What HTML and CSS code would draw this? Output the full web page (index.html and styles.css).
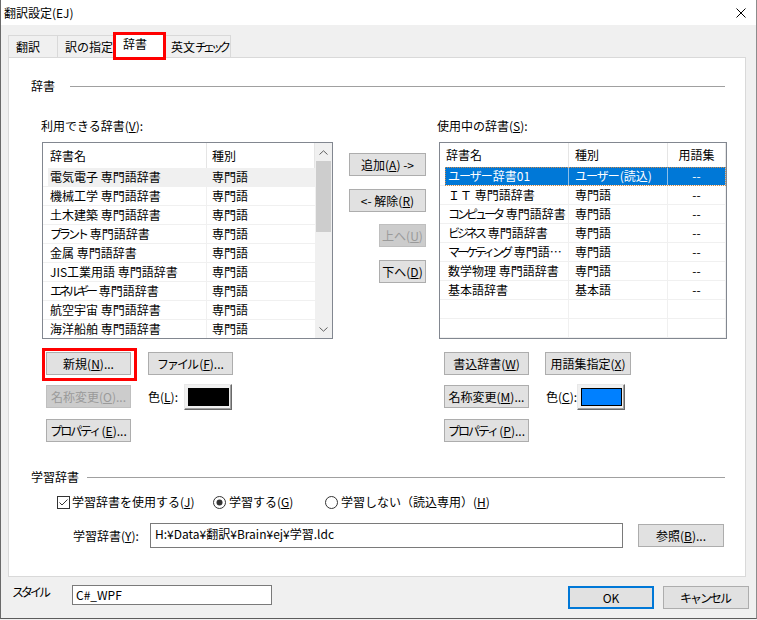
FILE: index.html
```html
<!DOCTYPE html>
<html lang="ja">
<head>
<meta charset="utf-8">
<title>翻訳設定(EJ)</title>
<link rel="stylesheet" href="styles.css">
</head>
<body>
<div class="window">
  <div class="titlebar">
    <span class="title">翻訳設定(EJ)</span>
    <svg class="close" viewBox="0 0 10 10" width="10" height="10"><path d="M0.5 0.5 L9.5 9.5 M9.5 0.5 L0.5 9.5" stroke="#000" stroke-width="1" fill="none"/></svg>
  </div>

  <div class="tabs">
    <div class="tab t1">翻訳</div>
    <div class="tab t2">訳の指定</div>
    <div class="tab sel">辞書</div>
    <div class="tab t4">英文<span class="kn4">チェック</span></div>
  </div>

  <div class="panel">
    <div class="group-head h1"><span class="gl">辞書</span><span class="rule"></span></div>

    <div class="main">
      <div class="col-left">
        <div class="lbl lbl-left">利用できる辞書(<u>V</u>):</div>
        <div class="list">
          <div class="lv">
            <div class="lv-head"><div class="lc1">辞書名</div><div class="lc2">種別</div></div>
            <div class="lv-row hover"><div class="lc1">電気電子 専門語辞書</div><div class="lc2">専門語</div></div>
            <div class="lv-row"><div class="lc1">機械工学 専門語辞書</div><div class="lc2">専門語</div></div>
            <div class="lv-row"><div class="lc1">土木建築 専門語辞書</div><div class="lc2">専門語</div></div>
            <div class="lv-row"><div class="lc1"><span class="kn">プラント</span> 専門語辞書</div><div class="lc2">専門語</div></div>
            <div class="lv-row"><div class="lc1">金属 専門語辞書</div><div class="lc2">専門語</div></div>
            <div class="lv-row"><div class="lc1">JIS工業用語 専門語辞書</div><div class="lc2">専門語</div></div>
            <div class="lv-row"><div class="lc1"><span class="kn">エネルギー</span> 専門語辞書</div><div class="lc2">専門語</div></div>
            <div class="lv-row"><div class="lc1">航空宇宙 専門語辞書</div><div class="lc2">専門語</div></div>
            <div class="lv-row"><div class="lc1">海洋船舶 専門語辞書</div><div class="lc2">専門語</div></div>
          </div>
          <div class="vscroll">
            <div class="sb-btn"><svg viewBox="0 0 9 5" width="9" height="5"><path d="M0.5 4.5 L4.5 0.8 L8.5 4.5" stroke="#606060" fill="none"/></svg></div>
            <div class="sb-thumb"></div>
            <div class="sb-track"></div>
            <div class="sb-btn"><svg viewBox="0 0 9 5" width="9" height="5"><path d="M0.5 0.5 L4.5 4.2 L8.5 0.5" stroke="#606060" fill="none"/></svg></div>
          </div>
        </div>
        <div class="btnrows">
          <div class="btnrow">
            <button class="btn bl newbtn">新規(<u>N</u>)...</button>
            <button class="btn bl gap17"><span class="kn2">ファイル</span>(<u>F</u>)...</button>
          </div>
          <div class="btnrow">
            <button class="btn bl dis">名称変更(<u>O</u>)...</button>
            <span class="clbl clbl-l">色(<u>L</u>):</span>
            <div class="swatch"><div class="fill black"></div></div>
          </div>
          <div class="btnrow r3">
            <button class="btn bl"><span class="kn2">プロパティ</span>(<u>E</u>)...</button>
          </div>
        </div>
      </div>

      <div class="col-mid">
        <button class="btn mb1">追加(<u>A</u>) -&gt;</button>
        <button class="btn mb2">&lt;- 解除(<u>R</u>)</button>
        <button class="btn mb3 dis">上へ(<u>U</u>)</button>
        <button class="btn mb4">下へ(<u>D</u>)</button>
      </div>

      <div class="col-right">
        <div class="lbl">使用中の辞書(<u>S</u>):</div>
        <div class="list list-r">
          <div class="rv">
            <div class="rv-head"><div class="rc1">辞書名</div><div class="rc2">種別</div><div class="rc3">用語集</div></div>
            <div class="rv-row sel"><div class="rc1"><span class="kn1">ユーザー</span>辞書01</div><div class="rc2"><span class="kn1">ユーザー</span>(読込)</div><div class="rc3">--</div></div>
            <div class="rv-row"><div class="rc1"><span class="fw">ＩＴ</span> 専門語辞書</div><div class="rc2">専門語</div><div class="rc3">--</div></div>
            <div class="rv-row"><div class="rc1"><span class="kn">コンピュータ</span> 専門語辞書</div><div class="rc2">専門語</div><div class="rc3">--</div></div>
            <div class="rv-row"><div class="rc1"><span class="kn">ビジネス</span> 専門語辞書</div><div class="rc2">専門語</div><div class="rc3">--</div></div>
            <div class="rv-row"><div class="rc1"><span class="kn">マーケティング</span> 専門語辞書</div><div class="rc2">専門語</div><div class="rc3">--</div></div>
            <div class="rv-row"><div class="rc1">数学物理 専門語辞書</div><div class="rc2">専門語</div><div class="rc3">--</div></div>
            <div class="rv-row"><div class="rc1">基本語辞書</div><div class="rc2">基本語</div><div class="rc3">--</div></div>
            <div class="rv-row"><div class="rc1"></div><div class="rc2"></div><div class="rc3"></div></div>
            <div class="rv-row"><div class="rc1"></div><div class="rc2"></div><div class="rc3"></div></div>
          </div>
        </div>
        <div class="btnrows">
          <div class="btnrow">
            <button class="btn br">書込辞書(<u>W</u>)</button>
            <button class="btn br2">用語集指定(<u>X</u>)</button>
          </div>
          <div class="btnrow">
            <button class="btn br">名称変更(<u>M</u>)...</button>
            <span class="clbl clbl-r">色(<u>C</u>):</span>
            <div class="swatch"><div class="fill blue"></div></div>
          </div>
          <div class="btnrow r3">
            <button class="btn br"><span class="kn2">プロパティ</span>(<u>P</u>)...</button>
          </div>
        </div>
      </div>
    </div>

    <div class="group-head h2"><span class="gl">学習辞書</span><span class="rule"></span></div>

    <div class="optrow">
      <div class="opt opt-chk">
        <svg class="box" viewBox="0 0 13 13" width="13" height="13"><rect x="0.5" y="0.5" width="12" height="12" fill="#fff" stroke="#333"/><path d="M2.5 6.5 L5 9 L10.5 3.5" stroke="#333" fill="none"/></svg>
        <span class="olbl">学習辞書を使用する(<u>J</u>)</span>
      </div>
      <div class="opt opt-r1">
        <svg class="box" viewBox="0 0 13 13" width="13" height="13"><circle cx="6.5" cy="6.5" r="6" fill="#fff" stroke="#333"/><circle cx="6.5" cy="6.5" r="3" fill="#333"/></svg>
        <span class="olbl olbl-r">学習する(<u>G</u>)</span>
      </div>
      <div class="opt">
        <svg class="box" viewBox="0 0 13 13" width="13" height="13"><circle cx="6.5" cy="6.5" r="6" fill="#fff" stroke="#333"/></svg>
        <span class="olbl olbl-r">学習しない（読込専用）(<u>H</u>)</span>
      </div>
    </div>

    <div class="dictrow">
      <span class="dlbl">学習辞書(<u>Y</u>):</span>
      <div class="tbox tbox-dict">H:¥Data¥翻訳¥Brain¥ej¥学習.ldc</div>
      <button class="btn bref">参照(<u>B</u>)...</button>
    </div>
  </div>

  <div class="footer">
    <span class="flbl"><span class="kn">スタイル</span></span>
    <div class="tbox tbox-style">C#_WPF</div>
    <span class="spacer"></span>
    <button class="btn def fbtn">OK</button>
    <button class="btn fbtn fcancel"><span class="kn2">キャンセル</span></button>
  </div>
</div>
</body>
</html>
```

FILE: styles.css
```css
*, *::before, *::after { box-sizing: border-box; }

body {
  margin: 0;
  background: #f0f0f0;
  font-family: "Noto Sans CJK JP", "Noto Sans", sans-serif;
  font-size: 12px;
  color: #000;
}

u { text-underline-offset: 1px; }

/* narrower kana, as in the UI font of the original */
.kn { letter-spacing: -3px; margin-right: 1px; }
.kn1 { letter-spacing: -1px; margin-right: 1px; }
.kn2 { letter-spacing: -2px; margin-right: 2px; }
.kn4 { letter-spacing: -4px; }
.fw { letter-spacing: 0; }

.window {
  width: 757px;
  height: 619px;
  background: #f0f0f0;
  border-left: 1px solid #6a6a6a;
  border-right: 1px solid #8c8c8c;
  border-bottom: 1px solid #5c5c5c;
  display: flex;
  flex-direction: column;
}

/* title bar */
.titlebar {
  flex: none;
  height: 25px;
  background: #fff;
  display: flex;
  align-items: center;
  padding-left: 3px;
  padding-right: 10px;
}
.title { flex: 1; line-height: 16px; }
.close { display: block; }

/* tabs */
.tabs {
  flex: none;
  height: 32px;
  display: flex;
  align-items: flex-end;
  padding-left: 7px;
}
.tab {
  height: 22px;
  border: 1px solid #d9d9d9;
  border-bottom: none;
  background: #f0f0f0;
  line-height: 22px;
  padding-left: 7px;
  white-space: nowrap;
  overflow: hidden;
}
.tab + .tab { margin-left: -1px; }
.t1 { width: 50px; }
.t2 { width: 59px; }
.tab.sel {
  width: 51px;
  height: 26px;
  margin-left: -2px;
  margin-right: -2px;
  margin-bottom: -1px;
  background: #fff;
  position: relative;
  z-index: 2;
  padding-left: 8px;
  line-height: 22px;
  overflow: visible;
}
.tab.sel::after {
  content: "";
  position: absolute;
  left: -2px;
  top: -1px;
  width: 53px;
  height: 28px;
  border: 3px solid #f00;
}
.tab.t4 { width: 68px; margin-left: 0; }

/* panel */
.panel {
  flex: none;
  margin-left: 7px;
  width: 738px;
  height: 520px;
  background: #fff;
  border: 1px solid #d9d9d9;
}

.group-head {
  display: flex;
  align-items: flex-start;
  height: 16px;
  margin-left: 22px;
  margin-right: 20px;
}
.group-head .gl { flex: none; line-height: 16px; }
.group-head .rule { flex: 1; height: 1px; margin-top: 8px; background: #a0a0a0; }
.h1 { margin-top: 20px; }
.h1 .gl { width: 39px; }
.h2 { margin-top: 27px; }
.h2 .gl { width: 56px; }

.main {
  display: flex;
  margin-top: 24px;
  margin-left: 33px;
}

.lbl { height: 16px; line-height: 16px; white-space: nowrap; }
.lbl-left { margin-left: -1px; }

.col-left { flex: none; width: 291px; }
.col-mid {
  flex: none;
  width: 77px;
  margin-left: 16px;
  display: flex;
  flex-direction: column;
  align-items: flex-end;
}
.col-right { flex: none; width: 290px; margin-left: 11px; }

/* list views */
.list {
  margin-top: 8px;
  height: 197px;
  border: 1px solid #828790;
  background: #fff;
  display: flex;
  overflow: hidden;
}
.list-r { margin-left: 2px; width: 288px; }

.lv { flex: none; width: 272px; overflow: hidden; }
.lv-head { display: flex; height: 25px; }
.lv-head > div { line-height: 25px; border-right: 1px solid #e5e5e5; }
.lv-row { display: flex; height: 19px; border-bottom: 1px solid #f0f0f0; line-height: 18px; }
.lv-row .lc1 { border-right: 1px solid #f0f0f0; }
.lv-row.hover { background: linear-gradient(to right, transparent 5px, #f0f0f0 5px); }
.lc1 { width: 164px; padding-left: 7px; white-space: nowrap; }
.lc2 { width: 108px; padding-left: 5px; white-space: nowrap; }

.vscroll {
  flex: none;
  width: 17px;
  background: #f0f0f0;
  display: flex;
  flex-direction: column;
}
.sb-btn {
  height: 18px;
  display: flex;
  align-items: center;
  justify-content: center;
}
.sb-btn svg { display: block; }
.sb-thumb { height: 71px; background: #cdcdcd; margin: 0 1px; }
.sb-track { flex: 1; }

.rv { width: 286px; }
.rv-head { display: flex; height: 24px; }
.rv-head > div { line-height: 24px; border-right: 1px solid #e5e5e5; }
.rv-row {
  display: flex;
  height: 19px;
  border-bottom: 1px solid #f0f0f0;
  line-height: 18px;
}
.rv-row > div { border-right: 1px solid #f0f0f0; }
.rc1 {
  width: 129px;
  padding-left: 7px;
  padding-right: 1px;
  white-space: nowrap;
  overflow: hidden;
  text-overflow: ellipsis;
}
.rv-head .rc1 { padding-left: 6px; }
.rv-row .rc1 { padding-left: 8px; }
.rc2 { width: 99px; padding-left: 6px; white-space: nowrap; }
.rc3 { width: 58px; text-align: center; white-space: nowrap; }
.rv-row.sel {
  position: relative;
  color: #fff;
  background: linear-gradient(to right, transparent 5px, #0078d7 5px);
}
.rv-row.sel > div { border-right-color: #8cbfe9; }
.rv-row.sel::after {
  content: "";
  position: absolute;
  left: 5px;
  right: 0;
  top: 0;
  bottom: -1px;
  border: 1px dotted #d08a48;
}

/* buttons */
.btn {
  height: 23px;
  padding: 0;
  margin: 0;
  background: #e1e1e1;
  border: 1px solid #adadad;
  border-radius: 0;
  font: inherit;
  color: #000;
  line-height: 20px;
  text-align: center;
  white-space: nowrap;
  flex: none;
}
.btn.dis { background: #cccccc; border-color: #bfbfbf; color: #9a9a9a; }
.btn.def { border: 2px solid #0078d7; }

.btnrows { margin-top: 13px; }
.btnrow { display: flex; align-items: center; height: 23px; }
.btnrow + .btnrow { margin-top: 10px; }
.btnrow.r3 { margin-top: 11px; }

.bl { width: 85px; margin-left: 4px; }
.bl.gap17 { margin-left: 17px; }
.newbtn { position: relative; overflow: visible; }
.newbtn::after {
  content: "";
  position: absolute;
  left: -5px;
  top: -5px;
  width: 95px;
  height: 33px;
  border: 3px solid #f00;
}
.br { width: 85px; margin-left: 7px; }
.br2 { width: 86px; margin-left: 16px; }

.clbl { flex: none; line-height: 16px; white-space: nowrap; }
.clbl-l { width: 36px; margin-left: 17px; }
.clbl-r { width: 31px; margin-left: 17px; }

.swatch {
  flex: none;
  width: 48px;
  height: 26px;
  border: 1px solid;
  border-color: #e8e8e8 #696969 #696969 #e8e8e8;
  box-shadow: inset -1px -1px 0 #a0a0a0;
  background: #f0f0f0;
  padding: 3px 2px 3px 3px;
}
.swatch .fill { height: 100%; border: 1px solid #000; }
.fill.black { background: #000; }
.fill.blue { background: #0080ff; }

.mb1 { width: 77px; margin-top: 35px; }
.mb2 { width: 77px; margin-top: 13px; }
.mb3 { width: 47px; margin-top: 12px; }
.mb4 { width: 47px; margin-top: 13px; }

/* learning dictionary */
.optrow {
  display: flex;
  align-items: center;
  height: 18px;
  margin-top: 8px;
  margin-left: 48px;
}
.opt { display: flex; align-items: center; flex: none; }
.opt .box { display: block; flex: none; }
.opt-chk { width: 156px; }
.opt-r1 { width: 112px; }
.olbl { margin-left: 2px; line-height: 16px; white-space: nowrap; }
.olbl-r { margin-left: 3px; }

.dictrow {
  display: flex;
  align-items: center;
  height: 25px;
  margin-top: 12px;
  margin-left: 64px;
}
.dlbl { flex: none; width: 77px; line-height: 16px; white-space: nowrap; }
.tbox {
  flex: none;
  background: #fff;
  border: 1px solid #7a7a7a;
  white-space: nowrap;
  overflow: hidden;
}
.tbox-dict { width: 473px; height: 25px; padding-left: 4px; line-height: 20px; }
.bref { width: 86px; margin-left: 15px; }

/* footer */
.footer {
  flex: none;
  height: 41px;
  display: flex;
  align-items: flex-start;
  padding-top: 8px;
  padding-right: 7px;
}
.flbl { flex: none; width: 60px; margin-left: 11px; margin-top: -1px; line-height: 16px; }
.tbox-style { width: 200px; height: 20px; padding-left: 3px; line-height: 17px; }
.spacer { flex: 1; }
.fbtn { width: 86px; margin-top: 1px; }
.fcancel { margin-left: 9px; }
```
